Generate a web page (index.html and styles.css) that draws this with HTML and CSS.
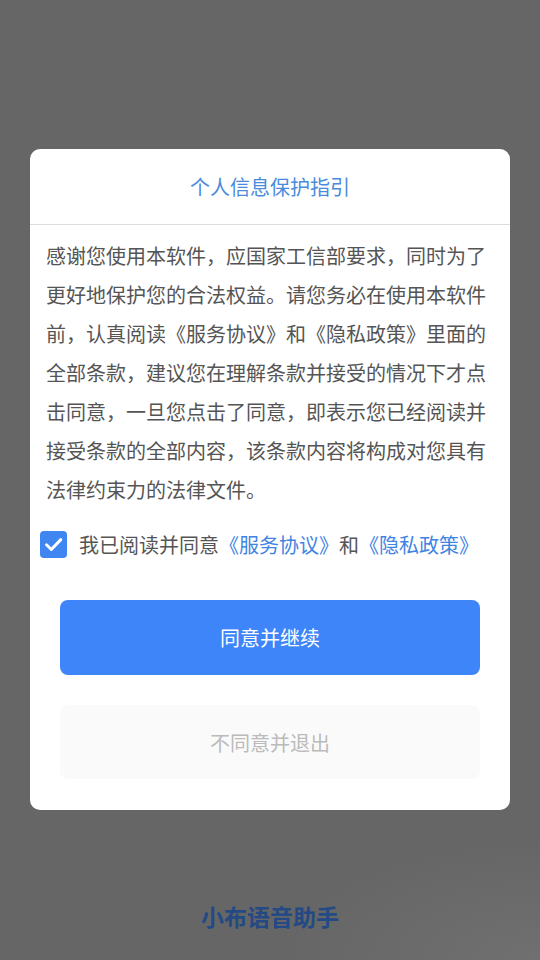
FILE: index.html
```html
<!DOCTYPE html>
<html lang="zh">
<head>
<meta charset="utf-8">
<link rel="stylesheet" href="styles.css">
</head>
<body>
<div class="screen">
  <div class="dialog">
    <div class="dialog-header">个人信息保护指引</div>
    <div class="dialog-body">
      <p class="intro">感谢您使用本软件，应国家工信部要求，同时为了更好地保护您的合法权益。请您务必在使用本软件前，认真阅读《服务协议》和《隐私政策》里面的全部条款，建议您在理解条款并接受的情况下才点击同意，一旦您点击了同意，即表示您已经阅读并接受条款的全部内容，该条款内容将构成对您具有法律约束力的法律文件。</p>
      <div class="agree-row">
        <span class="checkbox">
          <svg viewBox="0 0 27 27" width="27" height="27"><path d="M6.5 13.8 L11.3 18.5 L20.8 8.6" fill="none" stroke="#fff" stroke-width="3" stroke-linecap="round" stroke-linejoin="round"/></svg>
        </span>
        <span class="agree-text">我已阅读并同意<span class="link">《服务协议》</span>和<span class="link">《隐私政策》</span></span>
      </div>
      <div class="actions">
        <button class="btn btn-primary">同意并继续</button>
        <button class="btn btn-secondary">不同意并退出</button>
      </div>
    </div>
  </div>
  <div class="brand">小布语音助手</div>
</div>
</body>
</html>
```

FILE: styles.css
```css
* { box-sizing: border-box; }
html, body {
  margin: 0;
  padding: 0;
}
body {
  width: 540px;
  height: 960px;
  background: #666666;
  font-family: "Noto Sans CJK SC", "Noto Sans", sans-serif;
  overflow: hidden;
}
.screen {
  width: 540px;
  height: 960px;
  display: flex;
  flex-direction: column;
  align-items: center;
  padding-top: 149px;
  background: radial-gradient(ellipse 260px 120px at 540px 960px, #707070 0%, #666666 100%);
}
.dialog {
  width: 480px;
  background: #ffffff;
  border-radius: 10px;
  display: flex;
  flex-direction: column;
}
.dialog-header {
  height: 76px;
  display: flex;
  align-items: center;
  justify-content: center;
  color: #4a8bdc;
  font-size: 20px;
  border-bottom: 1px solid #dddddd;
  padding-bottom: 1px;
}
.dialog-body {
  padding: 11px 16px 31px 16px;
  display: flex;
  flex-direction: column;
}
.intro {
  margin: 0;
  font-size: 20px;
  line-height: 39px;
  color: #555555;
  width: 448px;
}
.agree-row {
  display: flex;
  align-items: center;
  margin-top: 17px;
  margin-left: -6px;
  gap: 12px;
  height: 36px;
}
.checkbox {
  width: 27px;
  height: 27px;
  border-radius: 4px;
  background: #3f86f0;
  display: flex;
  align-items: center;
  justify-content: center;
  flex: none;
}
.checkbox svg { display: block; }
.agree-text {
  font-size: 20px;
  color: #555555;
  white-space: nowrap;
}
.link { color: #3f84e3; }
.actions {
  display: flex;
  flex-direction: column;
  align-items: center;
  gap: 30px;
  margin-top: 38px;
}
.btn {
  width: 420px;
  height: 75px;
  border: none;
  border-radius: 8px;
  font-family: "Noto Sans CJK SC", "Noto Sans", sans-serif;
  font-size: 20px;
  padding: 0;
}
.btn-primary {
  background: #3d85f8;
  color: #ffffff;
}
.btn-secondary {
  background: #fafafa;
  color: #bbbbbb;
  height: 74px;
}
.brand {
  margin-top: 89px;
  font-size: 23px;
  font-weight: bold;
  color: #234a85;
}
```
